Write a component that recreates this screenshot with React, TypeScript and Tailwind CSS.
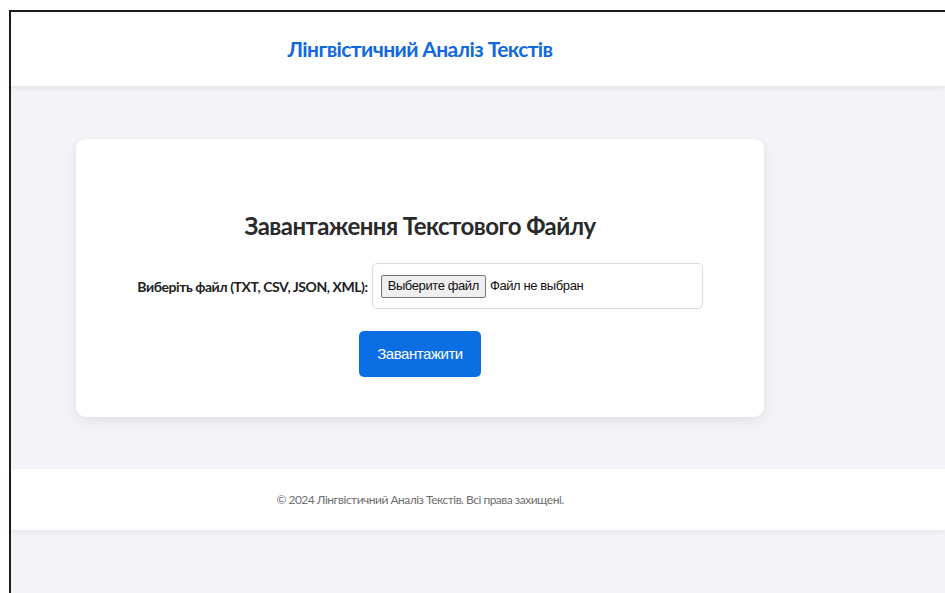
import React from "react";

export default function App() {
  return (
    <div className="min-h-screen bg-white pl-[9px] pt-[10px] font-['Lato',sans-serif]">
      <div className="flex h-[583px] flex-col border-l-2 border-t-2 border-[#1c1c1c] bg-[#f4f4f8]">
        {/* top bar */}
        <header className="h-[74px] shrink-0 bg-white shadow-[0_2px_5px_rgba(0,0,0,0.07)]">
          <div className="flex h-full w-[818px] items-center justify-center">
            <h1 className="text-[21px] font-bold tracking-[-0.6px] text-[#1169e0]">
              Лінгвістичний Аналіз Текстів
            </h1>
          </div>
        </header>

        <main className="w-[818px] px-[65px] pb-[52px] pt-[53px]">
          <div className="flex h-[278px] flex-col items-center rounded-[10px] bg-white pt-[70px] shadow-[0_4px_12px_rgba(0,0,0,0.08)]">
            <h2 className="text-[24px] font-bold leading-[34px] tracking-[-0.55px] text-[#2a2a2a]">
              Завантаження Текстового Файлу
            </h2>

            <form className="mt-5 flex flex-col items-center">
              <div className="flex items-center gap-[4px]">
                <label className="text-[14px] font-bold tracking-[-0.45px] text-[#222]">
                  Виберіть файл (TXT, CSV, JSON, XML):
                </label>
                <div className="flex h-[46px] w-[331px] items-center rounded-[5px] border border-[#dcdcdc] pl-[8px] font-['Liberation_Sans',sans-serif] text-[13px] tracking-[-0.4px] text-[#111]">
                  <span className="flex h-[23px] items-center rounded-[2px] border border-[#767676] bg-[#efefef] px-[6px]">
                    Выберите файл
                  </span>
                  <span className="ml-[4px]">Файл не выбран</span>
                </div>
              </div>

              <button
                type="button"
                className="mt-[22px] h-[46px] w-[122px] rounded-[5px] bg-[#0b6fe3] font-['Liberation_Sans',sans-serif] text-[15px] tracking-[-0.45px] text-white"
              >
                Завантажити
              </button>
            </form>
          </div>
        </main>

        <footer className="h-[61px] shrink-0 bg-white shadow-[0_2px_5px_rgba(0,0,0,0.06)]">
          <div className="flex h-full w-[818px] items-center justify-center">
            <p className="text-[12px] tracking-[-0.5px] text-[#6e6e6e]">
              © 2024 Лінгвістичний Аналіз Текстів. Всі права захищені.
            </p>
          </div>
        </footer>
      </div>
    </div>
  );
}
